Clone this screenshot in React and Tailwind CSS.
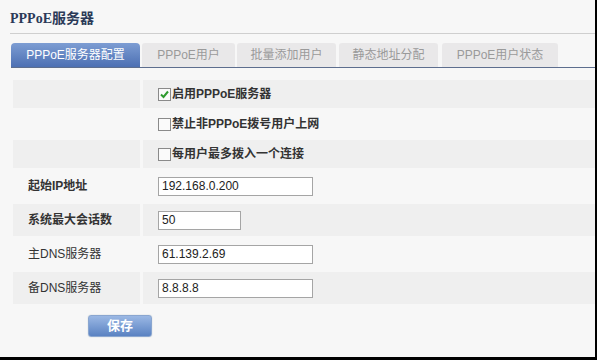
import React from "react";

const font = { fontFamily: '"Liberation Sans", "Noto Sans CJK SC", sans-serif' };

function Box({ checked }) {
  return (
    <svg width="13" height="13" viewBox="0 0 13 13" className="shrink-0">
      <rect x="0.5" y="0.5" width="12" height="12" fill="#fafafa" stroke="#8a8a8a" />
      {checked && (
        <path d="M3 6.5 L5.5 9 L10 3.5" fill="none" stroke="#2e9a2e" strokeWidth="2" />
      )}
    </svg>
  );
}

function Row({ shade, h, label, bold, children }) {
  return (
    <div className={`flex gap-[3px] ${h}`}>
      <div
        className={`w-[127px] shrink-0 flex items-center pl-[15px] text-[12px] text-[#333] ${shade ? "bg-[#efefef]" : ""} ${bold ? "font-bold" : ""}`}
      >
        {label}
      </div>
      <div className={`flex-1 flex items-center pl-[15px] ${shade ? "bg-[#efefef]" : ""}`}>{children}</div>
    </div>
  );
}

function Check({ checked, text }) {
  return (
    <div className="flex items-center text-[12px] font-bold text-[#333]">
      <Box checked={checked} />
      <span className="ml-[1px]">{text}</span>
    </div>
  );
}

function Input({ value, w }) {
  return (
    <div
      className={`${w} h-[19px] border border-[#a5a5a5] bg-white flex items-center pl-[3px] text-[12px] text-[#222]`}
    >
      {value}
    </div>
  );
}

export default function App() {
  const tabs = [
    { t: "PPPoE用户", w: "w-[93px]", ml: "ml-[2px]" },
    { t: "批量添加用户", w: "w-[99px]", ml: "ml-[2px]" },
    { t: "静态地址分配", w: "w-[99px]", ml: "ml-[3px]" },
    { t: "PPPoE用户状态", w: "w-[116px]", ml: "ml-[4px]" },
  ];
  return (
    <div
      style={font}
      className="w-[597px] h-[360px] bg-[#f7f7f7] border-r-2 border-b-[3px] border-black box-border overflow-hidden"
    >
      <div className="ml-[10px] pt-[10px] h-[34px] border-b border-[#cfcfcf]">
        <div className="text-[14px] font-bold text-[#2b3a58] leading-[16px]">
          <span style={{ fontFamily: '"Liberation Serif", "Noto Sans CJK SC", serif' }}>PPPoE</span>服务器
        </div>
      </div>
      <div className="ml-[11px] mt-[9px] flex h-[25px] border-b border-[#5d6e8e]">
        <div className="w-[129px] h-[24px] rounded-t-[4px] bg-gradient-to-b from-[#7d9dd3] to-[#4d70b3] text-white text-[12px] flex items-center justify-center">
          PPPoE服务器配置
        </div>
        {tabs.map((t) => (
          <div
            key={t.t}
            className={`${t.w} ${t.ml} h-[24px] rounded-t-[3px] bg-[#e9e8e9] text-[#9a9a9a] text-[12px] flex items-center justify-center`}
          >
            {t.t}
          </div>
        ))}
      </div>
      <div className="ml-[13px] mt-[12px] flex flex-col gap-[2px]">
        <Row shade h="h-[28px]">
          <Check checked text="启用PPPoE服务器" />
        </Row>
        <Row h="h-[28px]">
          <Check text="禁止非PPPoE拨号用户上网" />
        </Row>
        <Row shade h="h-[28px]">
          <Check text="每用户最多拨入一个连接" />
        </Row>
        <Row h="h-[32px]" label="起始IP地址" bold>
          <Input value="192.168.0.200" w="w-[155px]" />
        </Row>
        <Row shade h="h-[32px]" label="系统最大会话数" bold>
          <Input value="50" w="w-[83px]" />
        </Row>
        <Row h="h-[32px]" label="主DNS服务器">
          <Input value="61.139.2.69" w="w-[155px]" />
        </Row>
        <Row shade h="h-[32px]" label="备DNS服务器">
          <Input value="8.8.8.8" w="w-[155px]" />
        </Row>
      </div>
      <div className="ml-[88px] mt-[11px] w-[64px] h-[22px] rounded-[3px] border border-[#8aa6d0] bg-gradient-to-b from-[#9bb8e4] to-[#5a82c2] text-white text-[13px] font-bold flex items-center justify-center shadow-[0_0_1px_#9ab]">
        保存
      </div>
    </div>
  );
}
